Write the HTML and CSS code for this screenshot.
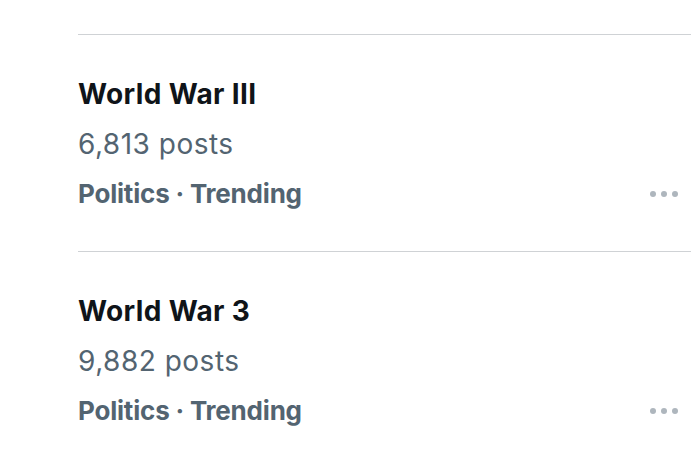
FILE: index.html
```html
<!DOCTYPE html>
<html>
<head>
<meta charset="utf-8">
<link rel="stylesheet" href="styles.css">
</head>
<body>
<div class="list">
  <div class="item">
    <div class="text">
      <div class="title">World War III</div>
      <div class="count">6,813 posts</div>
      <div class="meta">Politics · Trending</div>
    </div>
    <div class="more"><span></span><span></span><span></span></div>
  </div>
  <div class="item">
    <div class="text">
      <div class="title">World War 3</div>
      <div class="count">9,882 posts</div>
      <div class="meta">Politics · Trending</div>
    </div>
    <div class="more"><span></span><span></span><span></span></div>
  </div>
</div>
</body>
</html>
```
FILE: styles.css
```css
html, body { margin: 0; padding: 0; background: #fff; }
body { font-family: Inter, "Noto Sans", sans-serif; overflow: hidden; }
.list { padding: 34px 0 0 78px; }
.item {
  border-top: 1px solid #cfd2d5;
  height: 216px;
  display: flex;
  align-items: flex-start;
}
.text { flex: 1; padding-top: 43px; }
.title { font-size: 28px; font-weight: 700; color: #0f1419; line-height: 32px; letter-spacing: 0.35px; }
.count { font-size: 28px; color: #536471; line-height: 30px; margin-top: 19px; letter-spacing: 0.5px; }
.meta { font-size: 26px; font-weight: 700; color: #536471; line-height: 30px; margin-top: 20px; letter-spacing: -0.2px; }
.more { display: flex; gap: 5px; margin: 156px 13px 0 0; }
.more span { width: 6px; height: 6px; border-radius: 50%; background: #aeb6bd; }
```
